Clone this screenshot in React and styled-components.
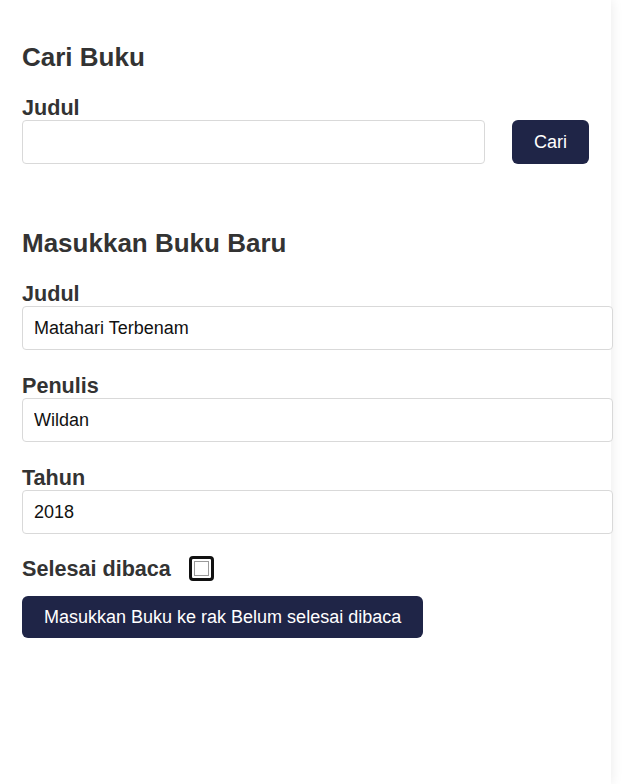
import { useState } from "react";
import styled, { createGlobalStyle } from "styled-components";

const GlobalStyle = createGlobalStyle`
  html, body {
    margin: 0;
    padding: 0;
    background: #ffffff;
    font-family: "Liberation Sans", Arial, sans-serif;
  }
`;

const Card = styled.main`
  width: 611px;
  min-height: 784px;
  box-sizing: border-box;
  padding: 42px 22px 0 22px;
  background: #fff;
  box-shadow: 0 0 12px rgba(0, 0, 0, 0.09);
`;

const Section = styled.section`
  display: flex;
  flex-direction: column;
  margin-top: ${(p) => p.$top || 0}px;
`;

const Title = styled.h2`
  margin: 0 0 24px 0;
  font-size: 26px;
  font-weight: 700;
  color: #333;
  line-height: 30px;
`;

const Field = styled.div`
  display: flex;
  flex-direction: column;
  gap: 1px;
  margin-bottom: ${(p) => p.$gap ?? 24}px;
`;

const Label = styled.label`
  font-size: 21.6px;
  font-weight: 700;
  color: #333;
  line-height: 23px;
`;

const Input = styled.input`
  box-sizing: border-box;
  width: ${(p) => (p.$wide ? "calc(100% + 24px)" : "100%")};
  height: 44px;
  padding: 0 11px;
  border: 1px solid #d9d9d9;
  border-radius: 4px;
  font-family: "Liberation Sans", Arial, sans-serif;
  font-size: 18px;
  color: #111;
  background: #fff;
  outline: none;
`;

const SearchRow = styled.div`
  display: flex;
  align-items: center;
  gap: 27px;
`;

const Button = styled.button`
  height: ${(p) => p.$h || 44}px;
  padding: 0 22px;
  border: none;
  border-radius: 6px;
  background: #1f2547;
  color: #fff;
  font-family: "Liberation Sans", Arial, sans-serif;
  font-size: 18px;
  cursor: pointer;
  flex-shrink: 0;
  align-self: flex-start;
`;

const CheckRow = styled.div`
  display: flex;
  align-items: center;
  gap: 18px;
  height: 25px;
  margin-top: -2px;
  margin-bottom: 15px;
`;

const Check = styled.input.attrs({ type: "checkbox" })`
  appearance: none;
  margin: 0;
  width: 25px;
  height: 25px;
  box-sizing: border-box;
  border: 3px solid #111;
  border-radius: 4px;
  background: #fff;
  box-shadow: inset 0 0 0 2px #fff, inset 0 0 0 3px #9a9a9a;
  &:checked {
    background: #1f2547;
  }
`;

export default function App() {
  const [search, setSearch] = useState("");
  const [title, setTitle] = useState("Matahari Terbenam");
  const [author, setAuthor] = useState("Wildan");
  const [year, setYear] = useState("2018");
  const [done, setDone] = useState(false);

  return (
    <>
      <GlobalStyle />
      <Card>
        <Section>
          <Title>Cari Buku</Title>
          <Field $gap={0}>
            <Label>Judul</Label>
            <SearchRow>
              <Input value={search} onChange={(e) => setSearch(e.target.value)} />
              <Button>Cari</Button>
            </SearchRow>
          </Field>
        </Section>

        <Section $top={64}>
          <Title>Masukkan Buku Baru</Title>
          <Field>
            <Label>Judul</Label>
            <Input $wide value={title} onChange={(e) => setTitle(e.target.value)} />
          </Field>
          <Field>
            <Label>Penulis</Label>
            <Input $wide value={author} onChange={(e) => setAuthor(e.target.value)} />
          </Field>
          <Field>
            <Label>Tahun</Label>
            <Input $wide value={year} onChange={(e) => setYear(e.target.value)} />
          </Field>
          <CheckRow>
            <Label>Selesai dibaca</Label>
            <Check checked={done} onChange={(e) => setDone(e.target.checked)} />
          </CheckRow>
          <Button $h={42}>
            Masukkan Buku ke rak {done ? "Selesai dibaca" : "Belum selesai dibaca"}
          </Button>
        </Section>
      </Card>
    </>
  );
}
